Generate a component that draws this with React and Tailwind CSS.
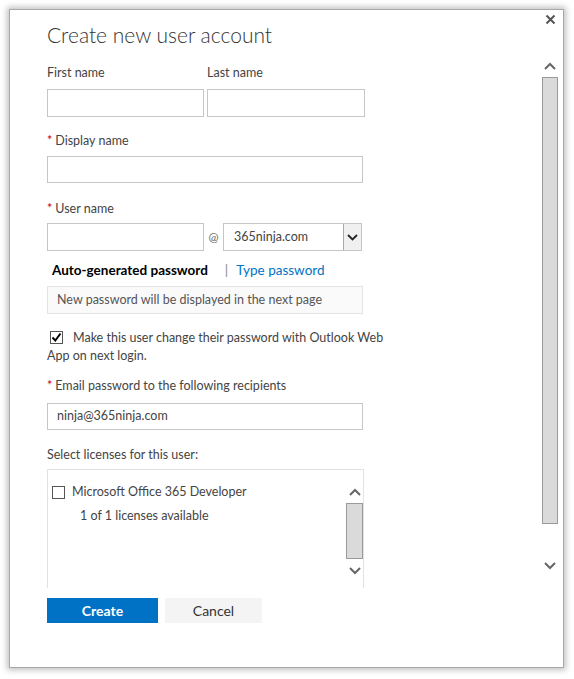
import React from 'react';

const font = { fontFamily: 'Lato, "Open Sans", sans-serif' };

function Label({ children, required }) {
  return (
    <div className="text-[12.5px] leading-[16px] text-[#444]">
      {required && <span className="text-[#c00] mr-[3px]">*</span>}
      {children}
    </div>
  );
}

function Chevron({ up, className }) {
  return (
    <svg width="12" height="8" viewBox="0 0 12 8" className={className}>
      <path d={up ? 'M1 7 L6 2 L11 7' : 'M1 1 L6 6 L11 1'} fill="none" stroke="#666" strokeWidth="2" />
    </svg>
  );
}

export default function App() {
  return (
    <div className="w-[574px] h-[679px] bg-white pt-[9px] pl-[9px]" style={font}>
      <div className="w-[555px] h-[659px] bg-white border border-[#a8a8a8] shadow-[0_0_6px_2px_rgba(0,0,0,0.25)] flex">
        {/* form */}
        <div className="flex-1 pl-[37px] pt-[11px]">
          <h1 className="text-[21px] leading-[28px] font-light text-[#333]">Create new user account</h1>

          <div className="flex gap-[3px] mt-[16px]">
            <div className="w-[157px]">
              <Label>First name</Label>
              <div className="mt-[8px] h-[28px] border border-[#c6c6c6]" />
            </div>
            <div className="w-[158px]">
              <Label>Last name</Label>
              <div className="mt-[8px] h-[28px] border border-[#c6c6c6]" />
            </div>
          </div>

          <div className="mt-[16px]">
            <Label required>Display name</Label>
            <div className="mt-[7px] w-[316px] h-[27px] border border-[#c6c6c6]" />
          </div>

          <div className="mt-[18px]">
            <Label required>User name</Label>
            <div className="mt-[6px] flex items-center">
              <div className="w-[157px] h-[28px] border border-[#c6c6c6]" />
              <span className="w-[19px] text-center text-[12px] text-[#666]">@</span>
              <div className="w-[139px] h-[28px] border border-[#c6c6c6] flex items-center">
                <span className="flex-1 pl-[10px] text-[12.5px] text-[#444]">365ninja.com</span>
                <div className="w-[18px] h-full bg-[#f0f0f0] border-l border-[#aaa] flex items-center justify-center">
                  <svg width="11" height="7" viewBox="0 0 11 7">
                    <path d="M1 1 L5.5 5.5 L10 1" fill="none" stroke="#222" strokeWidth="1.8" />
                  </svg>
                </div>
              </div>
            </div>
          </div>

          <div className="mt-[10px] flex items-center text-[13.5px] leading-[18px] pl-[5px]">
            <span className="font-bold text-black">Auto-generated password</span>
            <span className="ml-[17px] text-[#888]">|</span>
            <span className="ml-[8px] text-[#0072c6]">Type password</span>
          </div>

          <div className="mt-[7px] w-[316px] h-[28px] border border-[#e4e4e4] bg-[#fafafa] flex items-center pl-[9px] text-[12.5px] text-[#555]">
            New password will be displayed in the next page
          </div>

          <div className="mt-[15px] w-[342px] text-[12.5px] leading-[18px] text-[#444]">
            <span className="inline-block align-[-2px] ml-[3px] mr-[10px] w-[13px] h-[13px] border border-[#555] bg-white relative">
              <svg width="11" height="11" viewBox="0 0 11 11" className="absolute left-0 top-0">
                <path d="M1.5 5.5 L4.3 8.5 L9.5 1.5" fill="none" stroke="#000" strokeWidth="2" />
              </svg>
            </span>
            Make this user change their password with Outlook Web App on next login.
          </div>

          <div className="mt-[13px]">
            <Label required>Email password to the following recipients</Label>
            <div className="mt-[9px] w-[316px] h-[27px] border border-[#c6c6c6] flex items-center pl-[9px] text-[12.5px] text-[#444]">
              ninja@365ninja.com
            </div>
          </div>

          <div className="mt-[17px]">
            <Label>Select licenses for this user:</Label>
          </div>

          <div className="mt-[6px] w-[317px] h-[119px] border border-b-0 border-[#e2e2e2] flex">
            <div className="flex-1 pt-[14px] pl-[4px]">
              <div className="flex items-center text-[12.5px] leading-[16px] text-[#444]">
                <span className="w-[13px] h-[13px] border border-[#555] mr-[7px]" />
                Microsoft Office 365 Developer
              </div>
              <div className="mt-[8px] pl-[28px] text-[12.5px] leading-[16px] text-[#444]">1 of 1 licenses available</div>
            </div>
            <div className="w-[17px] flex flex-col items-center pt-[18px]">
              <Chevron up />
              <div className="mt-[7px] w-[17px] h-[56px] bg-[#dadada] border border-[#9a9a9a]" />
              <Chevron className="mt-[8px]" />
            </div>
          </div>

          <div className="mt-[10px] flex gap-[7px]">
            <div className="w-[111px] h-[25px] bg-[#0072c6] text-white text-[14px] font-bold flex items-center justify-center">Create</div>
            <div className="w-[97px] h-[25px] bg-[#f4f4f4] text-[#333] text-[14px] flex items-center justify-center">Cancel</div>
          </div>
        </div>

        {/* outer scroll column */}
        <div className="w-[16px] mr-[5px] flex flex-col items-center pt-[4px]">
          <svg width="11" height="11" viewBox="0 0 11 11">
            <path d="M1.5 1.5 L9.5 9.5 M9.5 1.5 L1.5 9.5" stroke="#555" strokeWidth="2" />
          </svg>
          <Chevron up className="mt-[37px]" />
          <div className="mt-[7px] w-[16px] h-[447px] bg-[#dadada] border border-[#9a9a9a]" />
          <Chevron className="mt-[38px]" />
        </div>
      </div>
    </div>
  );
}
